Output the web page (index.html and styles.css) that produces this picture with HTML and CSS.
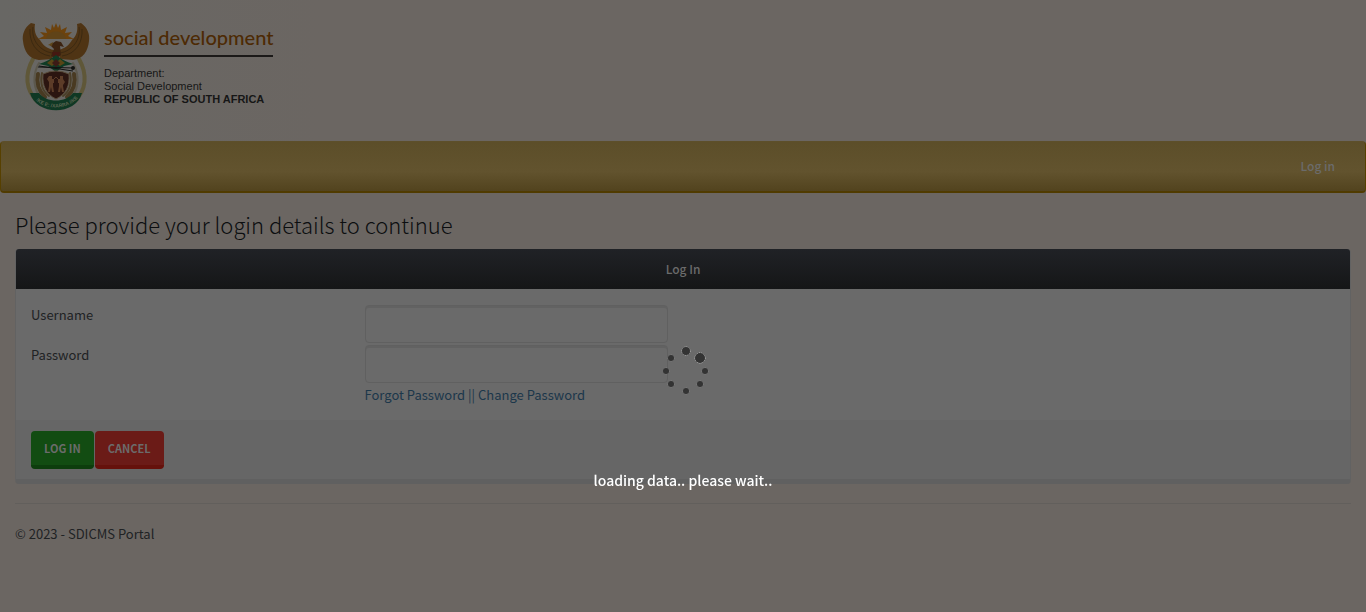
FILE: index.html
```html
<!DOCTYPE html>
<html lang="en">
<head>
<meta charset="utf-8">
<meta name="viewport" content="width=device-width, initial-scale=1">
<title>Log in - SDICMS Portal</title>
<link rel="stylesheet" href="styles.css">
</head>
<body>
<header class="banner">
  <svg class="crest" viewBox="0 0 68 88" aria-hidden="true">
    <g fill="none" stroke-linecap="round">
      <path d="M11 36C2 52 4 67 15 78M57 36C66 52 64 67 53 78" stroke="#5f5738" stroke-width="4"/>
      <path d="M17 40C10 52 11 67 20 76M51 40C58 52 57 67 48 76" stroke="#5c584d" stroke-width="2"/>
      <path d="M16 51C14 60 17 68 23 74M52 51C54 60 51 68 45 74" stroke="#493a22" stroke-width="4"/>
      <path d="M20 50C18 60 20 68 27 73M48 50C50 60 48 68 41 73" stroke="#4b3f29" stroke-width="2"/>
    </g>
    <path d="M9 0C2 5 0 12 1 18 2 28 7 36 17 37L30 36 32 27C25 26 20 21 18 17 13 13 12 6 13 1Z" fill="#4f3414"/>
    <path d="M59 0C66 5 68 12 67 18 66 28 61 36 51 37L38 36 36 27C43 26 48 21 50 17 55 13 56 6 55 1Z" fill="#4f3414"/>
    <path d="M11 4C9 17 18 28 30 30M8 6C7 19 14 31 28 33M57 4C59 17 50 28 38 30M60 6C61 19 54 31 40 33" fill="none" stroke="#3b2911" stroke-width="1"/>
    <path d="M16 16L22 13 18 9 25 10 23 4 29 7 30 1 32 5 34 0 36 5 38 1 39 7 45 4 43 10 50 9 46 13 52 16Z" fill="#6c420d"/>
    <path d="M24 16C25 6 43 6 44 16Z" fill="#604318"/>
    <path d="M28 22L34 18 39 19 42 24 38 23 39 32 34 36 29 33 32 26Z" fill="#3c2310"/>
    <path d="M26 22L31 19 30 23Z" fill="#604619"/>
    <path d="M30 29H38L37 33H31Z" fill="#451811"/>
    <path d="M17 41C24 39 29 36 34 32 39 36 44 39 51 41L42 43 34 49 26 43Z" fill="#0f3b25"/>
    <path d="M25 40L30 36 34 40 38 36 43 40 38 43 34 40 30 43Z" fill="#584516"/>
    <path d="M30 40L34 36 38 40 34 44Z" fill="#3c1b15"/>
    <path d="M16 44L52 45M17 43L51 48" stroke="#121312" stroke-width="1"/>
    <circle cx="51" cy="45" r="2" fill="#121312"/>
    <path d="M21 51Q34 45 47 51C48 63 44 71 34 76 24 71 20 63 21 51Z" fill="#2b1510" stroke="#5a4c3a" stroke-width="1"/>
    <path d="M27 53h3v3h2v4h-1v3l1 6h-2l-1-5-1 5h-2l1-6v-4l-2-3 2-3ZM38 53h3v3l2 3-2 3v1l1 6h-2l-1-5-1 5h-2l1-6v-3h-1v-4h2Z" fill="#5c3c28"/>
    <path d="M32 56L34 54 36 56" fill="none" stroke="#5c3c28" stroke-width="1"/>
    <path d="M8 70L17 70C24 80 44 80 51 70L60 70C54 93 14 93 8 70Z" fill="#0f3824"/>
    <path id="motto-line" d="M14 77C23 87 45 87 55 76" fill="none"/>
    <text class="motto"><textPath href="#motto-line">!KE E: /XARRA //KE</textPath></text>
  </svg>
  <div class="identity">
    <div class="department">social development</div>
    <div class="identity-lines">Department:<br>Social Development<br><strong>REPUBLIC OF SOUTH AFRICA</strong></div>
  </div>
</header>
<nav class="navbar"><a href="#login">Log in</a></nav>
<main class="container">
  <h1>Please provide your login details to continue</h1>
  <form class="panel" id="login">
    <h2 class="panel-heading">Log In</h2>
    <div class="panel-body">
      <div class="row"><label for="username">Username</label><div class="field"><input id="username" type="text"></div></div>
      <div class="row"><label for="password">Password</label><div class="field"><input id="password" type="password"></div></div>
      <div class="row links"><span></span><div class="field"><a href="#forgot">Forgot Password</a> || <a href="#change">Change Password</a></div></div>
    </div>
    <div class="panel-footer">
      <button class="btn btn-success" type="button">LOG IN</button>
      <button class="btn btn-danger" type="button">CANCEL</button>
    </div>
  </form>
  <hr>
  <footer>© 2023 - SDICMS Portal</footer>
</main>
<div class="loading" role="status">
  <svg class="spinner" viewBox="0 0 46 50" aria-hidden="true">
    <g fill="none" stroke="#8d8d8d" stroke-width="1" stroke-dasharray="1 1">
      <circle cx="23" cy="6" r="4" stroke="#ddd"/><circle cx="37" cy="13" r="5" stroke="#ddd"/>
      <circle cx="42" cy="26" r="3"/><circle cx="37" cy="39" r="3"/>
      <circle cx="23" cy="46" r="3"/><circle cx="8" cy="39" r="3"/>
      <circle cx="3" cy="26" r="3"/><circle cx="8" cy="13" r="3"/>
    </g>
    <g fill="#333">
      <circle cx="23" cy="6" r="4"/><circle cx="37" cy="13" r="5"/>
      <circle cx="42" cy="26" r="3"/><circle cx="37" cy="39" r="3"/>
      <circle cx="23" cy="46" r="3"/><circle cx="8" cy="39" r="3"/>
      <circle cx="3" cy="26" r="3"/><circle cx="8" cy="13" r="3"/>
    </g>
  </svg>
  <p>loading data.. please wait..</p>
</div>
</body>
</html>
```
FILE: styles.css
```css
* { box-sizing: border-box; }
body {
  margin: 0;
  min-height: 100vh;
  background: #6b6662;
  color: #202224;
  font: 13px/20px "Noto Sans CJK SC", "Noto Sans", sans-serif;
}
a { text-decoration: none; }
.banner {
  display: flex;
  gap: 14px;
  padding: 23px 22px 30px;
  background: linear-gradient(90deg, #686764, #6b6662 320px);
}
.crest { width: 68px; height: 88px; }
.motto { fill: #5d6552; font: bold 5px "Liberation Sans", sans-serif; }
.identity { font: 11px/13px "Liberation Sans", Arial, sans-serif; color: #161616; }
.department {
  padding-bottom: 4px;
  border-bottom: 2px solid #1b1918;
  color: #4d2a04;
  font: 500 20px/28px Lato, sans-serif;
}
.identity-lines { padding-top: 10px; }
.navbar {
  display: flex;
  align-items: center;
  justify-content: flex-end;
  height: 52px;
  padding: 0 30px 2px;
  border: 1px solid #574000;
  border-top-color: #5d4f2a;
  border-bottom: 2px solid #503b00;
  border-radius: 4px;
  background: linear-gradient(#5c4e29, #62532e 60%, #52431e);
}
.navbar a { color: #6b6b6b; font-size: 12px; font-weight: 500; }
.container { padding: 0 15px; }
h1 { margin: 0; padding: 16px 0 10px; font-size: 22px; line-height: 30px; font-weight: 300; color: #0c0e10; }
.panel {
  border: 1px solid #626262;
  border-top: 0;
  border-bottom: 5px solid #606060;
  border-radius: 4px;
  background: #6a6a6a;
}
.panel-heading {
  margin: 0;
  border-radius: 3px 3px 0 0;
  background: linear-gradient(#202226, #151617);
  color: #6b6b6b;
  font-size: 12px;
  font-weight: 500;
  line-height: 40px;
  text-align: center;
}
.panel-body { padding: 16px 0 14px; }
.row { display: grid; grid-template-columns: 1fr 3fr; height: 40px; }
.row label, .field { padding-left: 15px; }
.row input {
  display: block;
  width: 303px;
  height: 38px;
  padding: 8px 12px;
  border: 1px solid #606060;
  border-radius: 4px;
  background: #6a6a6a;
  box-shadow: inset 0 2px 0 #626262;
  color: #202224;
  font: inherit;
}
.links { height: 21px; color: #1c374a; }
.links a { color: #1c374a; }
.panel-footer { display: flex; gap: 1px; padding: 11px 15px 10px; background: #666; }
.btn {
  height: 38px;
  padding: 0 13px;
  border: 0;
  border-bottom: 4px solid;
  border-radius: 4px;
  color: #6b6b6b;
  font: bold 11px/34px "Noto Sans CJK SC", "Noto Sans", sans-serif;
}
.btn-success { background: #124c12; border-color: #0d3d0d; }
.btn-danger { background: #6b1b17; border-color: #65110b; }
hr { height: 1px; margin: 19px 0 20px; border: 0; background: #625f5c; }
.loading {
  position: fixed;
  inset: 0;
  display: flex;
  flex-direction: column;
  align-items: center;
  padding-top: 345px;
}
.spinner { width: 46px; height: 50px; margin-left: 6px; }
.loading p { margin: 75px 0 0; color: #fff; font-size: 14px; font-weight: 500; }
```
